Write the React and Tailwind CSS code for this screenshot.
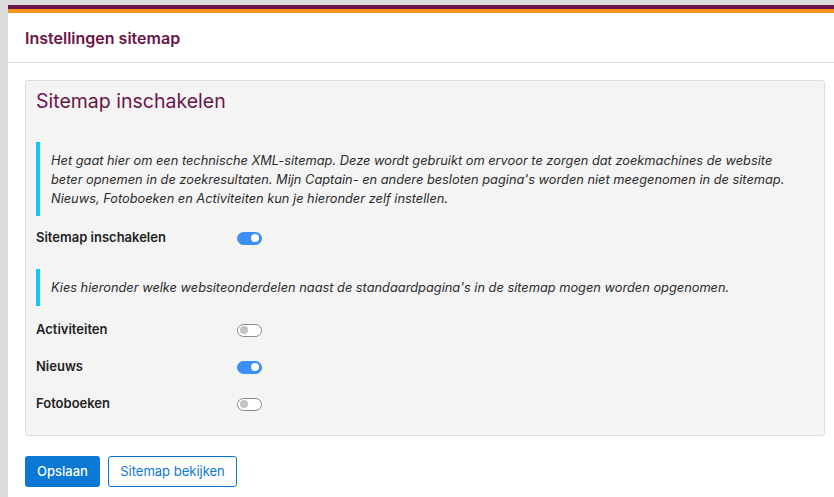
import React, { useState } from 'react';

const Toggle = ({ on, onChange }) => (
  <button
    type="button"
    onClick={onChange}
    className={`relative h-[13px] w-[25px] rounded-full border ${on ? 'border-[#3a8ef6] bg-[#3a8ef6]' : 'border-[#8a8a8a] bg-white'}`}
  >
    <span
      className={`absolute top-[1.5px] h-[8px] w-[8px] rounded-full ${on ? 'right-[2px] bg-white' : 'left-[2px] bg-[#c4c4c4]'}`}
    />
  </button>
);

const Note = ({ children, pad = 'py-[8.5px]' }) => (
  <div className={`border-l-4 border-[#0dcaf0] ${pad} pl-[11px] pr-2 text-[12.8px] italic leading-[19px] text-[#2b2b2b]`}>
    {children}
  </div>
);

const Row = ({ label, on, onChange }) => (
  <div className="flex h-[20px] items-center">
    <span className="w-[201px] text-[13px] font-semibold text-[#222]">{label}</span>
    <Toggle on={on} onChange={onChange} />
  </div>
);

export default function App() {
  const [settings, setSettings] = useState({ sitemap: true, activiteiten: false, nieuws: true, fotoboeken: false });
  const flip = (key) => setSettings((s) => ({ ...s, [key]: !s[key] }));

  return (
    <div
      className="h-[497px] w-[834px] overflow-hidden bg-[#dcdcdc] pl-[8px] pt-[5px]"
      style={{ fontFamily: 'Inter, "Noto Sans", sans-serif' }}
    >
      <div className="h-[492px] bg-white">
        <div className="h-[4px] bg-[#6b1447]" />
        <div className="h-[4px] bg-[#f7941d]" />
        <div className="flex h-[50px] items-center border-b border-[#dddddd] px-[17px]">
          <h1 className="text-[16px] font-semibold text-[#6b1447]">Instellingen sitemap</h1>
        </div>

        <div className="pl-[17px] pr-[9px] pt-[17px]">
          <section className="rounded-[3px] border border-[#dcdcdc] bg-[#f4f4f4] px-[10px] pb-[21px] pt-[9px]">
            <h2 className="text-[19.5px] leading-[22px] text-[#6b1447]">Sitemap inschakelen</h2>

            <div className="mt-[30px]">
              <Note>
                Het gaat hier om een technische XML-sitemap. Deze wordt gebruikt om ervoor te zorgen dat zoekmachines de website
                <br />
                beter opnemen in de zoekresultaten. Mijn Captain- en andere besloten pagina's worden niet meegenomen in de sitemap.
                <br />
                Nieuws, Fotoboeken en Activiteiten kun je hieronder zelf instellen.
              </Note>
            </div>

            <div className="mt-[12px]">
              <Row label="Sitemap inschakelen" on={settings.sitemap} onChange={() => flip('sitemap')} />
            </div>

            <div className="mt-[21px]">
              <Note pad="py-[9px]">
                Kies hieronder welke websiteonderdelen naast de standaardpagina's in de sitemap mogen worden opgenomen.
              </Note>
            </div>

            <div className="mt-[14px] flex flex-col gap-[17px]">
              <Row label="Activiteiten" on={settings.activiteiten} onChange={() => flip('activiteiten')} />
              <Row label="Nieuws" on={settings.nieuws} onChange={() => flip('nieuws')} />
              <Row label="Fotoboeken" on={settings.fotoboeken} onChange={() => flip('fotoboeken')} />
            </div>
          </section>

          <div className="mt-[20px] flex gap-[8px]">
            <button type="button" className="h-[31px] w-[75px] rounded-[3px] bg-[#0b78d6] text-[13px] font-medium text-white">
              Opslaan
            </button>
            <button type="button" className="h-[31px] w-[129px] rounded-[3px] border border-[#0b78d6] bg-white text-[13px] text-[#0b78d6]">
              Sitemap bekijken
            </button>
          </div>
        </div>
      </div>
    </div>
  );
}
